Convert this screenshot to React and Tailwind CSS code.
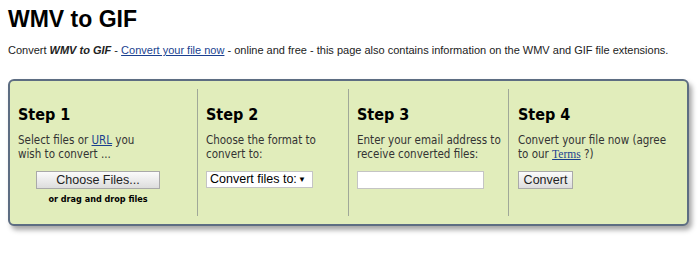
import React from 'react';

const verdana = { fontFamily: '"DejaVu Sans Condensed", "DejaVu Sans", Verdana, sans-serif', fontStretch: 'condensed' };

function App() {
  return (
    <div className="w-[700px] h-[265px] bg-white text-black font-['Liberation_Sans',Arial,sans-serif] overflow-hidden">
      <div className="px-2 pt-[5px]">
        <h1 className="text-[23px] leading-[28px] font-bold">WMV to GIF</h1>
        <p className="mt-[10px] text-[11px] leading-[14px] text-[#222]">
          Convert <b><i>WMV to GIF</i></b> -{' '}
          <a href="#" className="underline text-[#1a3f8f]">Convert your file now</a> - online and free - this page
          also contains information on the WMV and GIF file extensions.
        </p>
      </div>

      {/* Steps box */}
      <div className="ml-2 mt-[22px] w-[681px] h-[147px] rounded-[6px] border-2 border-[#5d6d82] bg-[#e1edbb] shadow-[3px_4px_5px_rgba(0,0,0,0.35)]">
        <div className="grid grid-cols-[187px_151px_160px_1fr] h-full py-[8px]" style={verdana}>
          <div className="pl-[8px] pt-[16px]">
            <h2 className="text-[16px] leading-[20px] font-bold">Step 1</h2>
            <p className="mt-[8px] text-[11.5px] leading-[14px] text-[#333]">
              Select files or <a href="#" className="underline text-[#1a3f8f]">URL</a> you<br />wish to convert ...
            </p>
            <div className="mt-[10px] pl-[18px] flex flex-col items-start">
              <button className="w-[124px] h-[18px] border border-[#a9a9a9] bg-gradient-to-b from-[#fbfbfb] to-[#dddddd] text-[12.5px] leading-[16px] font-['Liberation_Sans',Arial,sans-serif] text-[#222]">
                Choose Files...
              </button>
              <div className="mt-[4px] w-[124px] text-center text-[9px] leading-[12px] font-bold">or drag and drop files</div>
            </div>
          </div>
          <div className="border-l border-[#a0a898] pl-[8px] pt-[16px]">
            <h2 className="text-[16px] leading-[20px] font-bold">Step 2</h2>
            <p className="mt-[8px] text-[11.5px] leading-[14px] text-[#333]">
              Choose the format to<br />convert to:
            </p>
            <div className="mt-[10px] w-[107px] h-[17px] border border-[#c4c4c4] bg-white flex items-center justify-between pl-[3px] pr-[6px] whitespace-nowrap text-[12.5px] leading-[15px] font-['Liberation_Sans',Arial,sans-serif]">
              <span>Convert files to:</span>
              <span className="text-[8px]">▼</span>
            </div>
          </div>
          <div className="border-l border-[#a0a898] pl-[8px] pt-[16px]">
            <h2 className="text-[16px] leading-[20px] font-bold">Step 3</h2>
            <p className="mt-[8px] text-[11.5px] leading-[14px] text-[#333] whitespace-nowrap">
              Enter your email address to<br />receive converted files:
            </p>
            <input type="text" className="mt-[10px] block w-[127px] h-[18px] border border-[#c4c4c4] bg-white" />
          </div>
          <div className="border-l border-[#a0a898] pl-[9px] pt-[16px]">
            <h2 className="text-[16px] leading-[20px] font-bold">Step 4</h2>
            <p className="mt-[8px] text-[11.5px] leading-[14px] text-[#333] whitespace-nowrap">
              Convert your file now (agree<br />to our <a href="#" className="underline text-[#1a3f8f] font-['Liberation_Serif',serif]">Terms</a> ?)
            </p>
            <button className="mt-[10px] block w-[55px] h-[18px] border border-[#a9a9a9] bg-gradient-to-b from-[#fbfbfb] to-[#dddddd] text-[12.5px] leading-[16px] font-['Liberation_Sans',Arial,sans-serif] text-[#222]">
              Convert
            </button>
          </div>
        </div>
      </div>
    </div>
  );
}

export default App;
